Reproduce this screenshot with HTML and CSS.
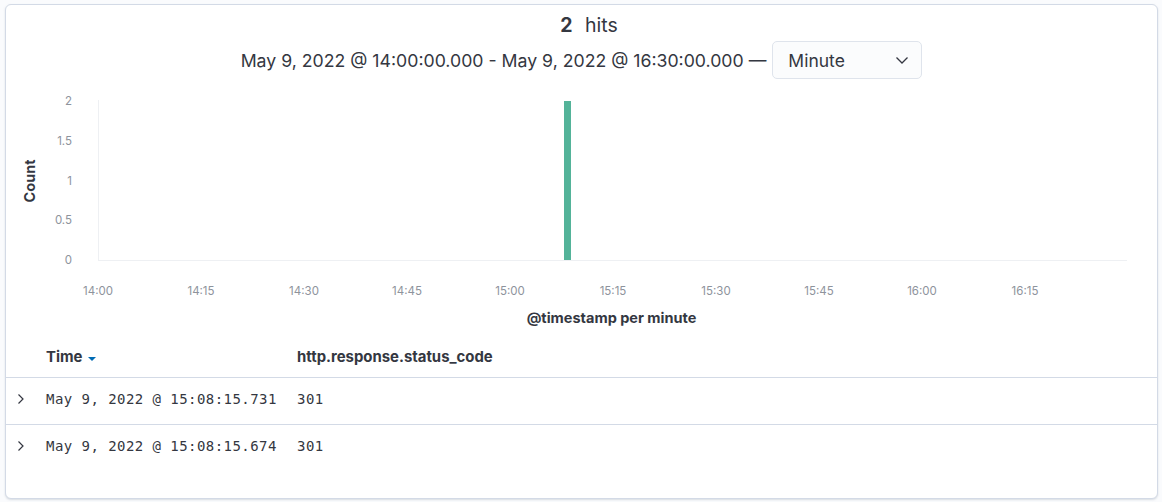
FILE: index.html
```html
<!DOCTYPE html>
<html>
<head>
<meta charset="utf-8">
<link rel="stylesheet" href="styles.css">
</head>
<body>
<div class="card">
  <div class="hits"><strong>2</strong> hits</div>
  <div class="range">
    <span class="range-text">May 9, 2022 @ 14:00:00.000 - May 9, 2022 @ 16:30:00.000 —</span>
    <div class="select">
      <span>Minute</span>
      <svg class="sel-arrow" width="16" height="16" viewBox="0 0 16 16"><path d="M2.5 5.5 L8 11 L13.5 5.5" fill="none" stroke="#343741" stroke-width="1.3"/></svg>
    </div>
  </div>
  <div class="chart">
    <div class="ytitle">Count</div>
    <svg class="plot" width="1151" height="218" viewBox="6 88 1151 218">
      <g class="ylab" text-anchor="end">
        <text x="72" y="105">2</text>
        <text x="72" y="145">1.5</text>
        <text x="72" y="185">1</text>
        <text x="72" y="224">0.5</text>
        <text x="72" y="264">0</text>
      </g>
      <line x1="98.5" y1="100" x2="98.5" y2="260" stroke="#eef0f3" stroke-width="1"/>
      <line x1="98" y1="260.5" x2="1127" y2="260.5" stroke="#eef0f3" stroke-width="1"/>
      <rect x="564" y="101" width="7" height="159" fill="#54b399"/>
      <g class="xlab" text-anchor="middle">
        <text x="98" y="295">14:00</text>
        <text x="201" y="295">14:15</text>
        <text x="304" y="295">14:30</text>
        <text x="407" y="295">14:45</text>
        <text x="510" y="295">15:00</text>
        <text x="613" y="295">15:15</text>
        <text x="716" y="295">15:30</text>
        <text x="819" y="295">15:45</text>
        <text x="922" y="295">16:00</text>
        <text x="1025" y="295">16:15</text>
      </g>
    </svg>
    <div class="xtitle">@timestamp per minute</div>
  </div>
  <div class="table">
    <div class="thead">
      <div class="c-toggle"></div>
      <div class="c-time">Time <span class="sort"></span></div>
      <div class="c-field">http.response.status_code</div>
    </div>
    <div class="row">
      <div class="c-toggle"><svg width="10" height="12" viewBox="0 0 10 12"><path d="M2.5 1.5 L7 6 L2.5 10.5" fill="none" stroke="#343741" stroke-width="1.2"/></svg></div>
      <div class="c-time mono">May 9, 2022 @ 15:08:15.731</div>
      <div class="c-field mono">301</div>
    </div>
    <div class="row">
      <div class="c-toggle"><svg width="10" height="12" viewBox="0 0 10 12"><path d="M2.5 1.5 L7 6 L2.5 10.5" fill="none" stroke="#343741" stroke-width="1.2"/></svg></div>
      <div class="c-time mono">May 9, 2022 @ 15:08:15.674</div>
      <div class="c-field mono">301</div>
    </div>
  </div>
</div>
</body>
</html>
```

FILE: styles.css
```css
html, body {
  margin: 0;
  background: #fafbfd;
}
body {
  padding: 4px 4px 3px 5px;
  font-family: Inter, "Noto Sans", sans-serif;
  color: #343741;
}
.card {
  box-sizing: border-box;
  height: 495px;
  background: #fff;
  border: 1px solid #d3dae6;
  border-radius: 6px;
  box-shadow: 0 1px 2px rgba(152, 162, 179, 0.35);
  overflow: hidden;
}
.hits {
  margin-top: 9px;
  height: 22px;
  line-height: 22px;
  text-align: center;
  font-size: 19.5px;
  padding-left: 15px;
}
.hits strong {
  font-weight: 700;
  margin-right: 7px;
}
.range {
  margin-top: 5px;
  display: flex;
  justify-content: center;
  align-items: center;
  gap: 6px;
}
.range-text {
  font-size: 17.7px;
}
.select {
  box-sizing: border-box;
  width: 150px;
  height: 38px;
  border: 1px solid #dfe4ec;
  border-radius: 5px;
  background: #fbfcfd;
  display: flex;
  align-items: center;
  justify-content: space-between;
  padding: 0 11px 0 15px;
  font-size: 17.5px;
  color: #343741;
}
.chart {
  position: relative;
  margin-top: 9px;
}
.plot {
  display: block;
}
.ylab text, .xlab text {
  font-family: Inter, sans-serif;
  font-size: 11.5px;
  fill: #8e939c;
}
.ytitle {
  position: absolute;
  left: 16px;
  top: 93px;
  transform: rotate(-90deg) translate(-50%, 0);
  transform-origin: 0 0;
  font-size: 14.5px;
  font-weight: 700;
  line-height: 15px;
}
.xtitle {
  text-align: center;
  font-size: 14.5px;
  font-weight: 700;
  padding-left: 60px;
  margin-top: 3px;
  line-height: 17px;
}
.table {
  margin-top: 10px;
}
.thead {
  display: flex;
  align-items: center;
  height: 42px;
  font-size: 14.9px;
  font-weight: 700;
  border-bottom: 1px solid #d3dae6;
  box-sizing: border-box;
}
.row {
  display: flex;
  align-items: center;
  height: 47px;
  border-bottom: 1px solid #d3dae6;
  box-sizing: border-box;
  padding-bottom: 5px;
}
.row:last-child {
  border-bottom: none;
}
.c-toggle {
  width: 40px;
  padding-left: 10px;
  box-sizing: border-box;
  display: flex;
  align-items: center;
}
.c-time {
  width: 251px;
  display: flex;
  align-items: center;
  gap: 6px;
}
.c-field {
  flex: 1;
}
.mono {
  font-family: "DejaVu Sans Mono", "Liberation Mono", monospace;
  font-size: 14px;
  letter-spacing: 0.45px;
  color: #343741;
}
.sort {
  display: inline-block;
  width: 0;
  height: 0;
  border-left: 4px solid transparent;
  border-right: 4px solid transparent;
  border-top: 4px solid #006bb4;
  margin-top: 4px;
}
```
